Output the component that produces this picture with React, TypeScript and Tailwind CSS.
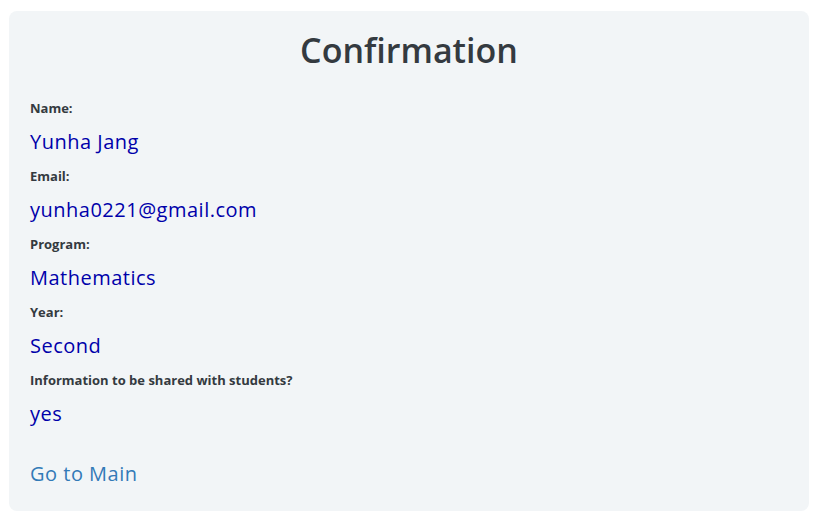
export default function App() {
  const rows = [
    { label: "Name:", value: "Yunha Jang" },
    { label: "Email:", value: "yunha0221@gmail.com" },
    { label: "Program:", value: "Mathematics" },
    { label: "Year:", value: "Second" },
    { label: "Information to be shared with students?", value: "yes" },
  ];

  return (
    <div
      className="min-h-[521px] w-[817px] bg-white pt-[11px] pl-[9px]"
      style={{ fontFamily: "'Open Sans', Lato, sans-serif" }}
    >
      <div className="flex w-[800px] flex-col rounded-lg bg-[#f2f5f7] px-[21px] pb-[22px] pt-[12px]">
        {/* heading */}
        <h1 className="mb-[22px] text-center text-[34px] font-semibold leading-[54px] text-[#343a40]">
          Confirmation
        </h1>

        {rows.map((r) => (
          <div key={r.label} className="flex flex-col gap-[10px] pb-[10px]">
            <div className="text-[13px] font-bold leading-[18px] text-[#343a40]">{r.label}</div>
            <div className="text-[20px] leading-[30px] tracking-[0.5px] text-[#0000aa]">{r.value}</div>
          </div>
        ))}

        {/* link */}
        <a href="#" className="mt-[20px] text-[20px] leading-[30px] tracking-[0.5px] text-[#337ab7]">
          Go to Main
        </a>
      </div>
    </div>
  );
}
